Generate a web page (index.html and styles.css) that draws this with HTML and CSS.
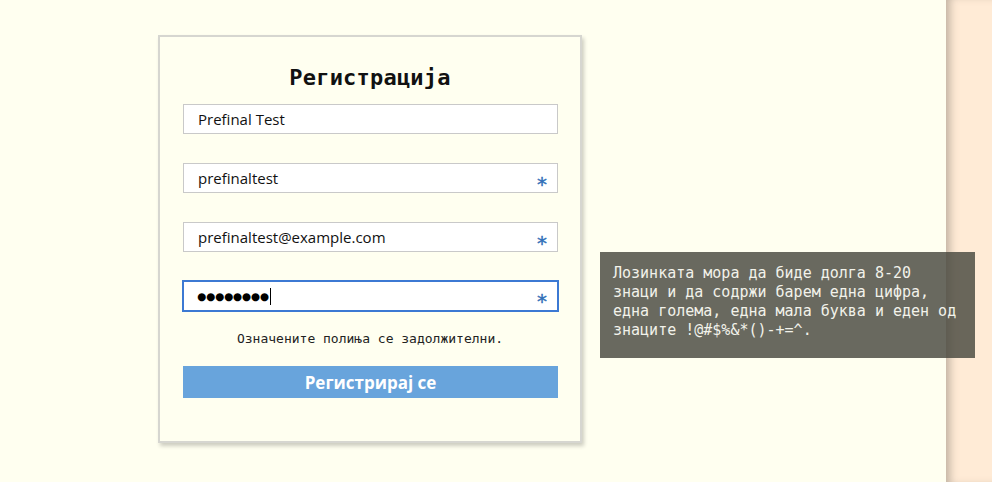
FILE: index.html
```html
<!DOCTYPE html>
<html lang="mk">
<head>
<meta charset="utf-8">
<title>Регистрација</title>
<link rel="stylesheet" href="styles.css">
</head>
<body>
<div class="page">
  <main class="main">
    <form class="card">
      <h1 class="title">Регистрација</h1>
      <div class="field">
        <input class="input" type="text" value="Prefinal Test">
      </div>
      <div class="field">
        <input class="input" type="text" value="prefinaltest">
        <span class="req">*</span>
      </div>
      <div class="field">
        <input class="input" type="email" value="prefinaltest@example.com">
        <span class="req">*</span>
      </div>
      <div class="field">
        <div class="input focused"><span class="dots">●●●●●●●●</span><span class="caret"></span></div>
        <span class="req">*</span>
      </div>
      <p class="note">Означените полиња се задолжителни.</p>
      <button class="submit" type="button">Регистрирај се</button>
    </form>
    <div class="tooltip">Лозинката мора да биде долга 8-20 знаци и да содржи барем една цифра, една голема, една мала буква и еден од знаците !@#$%&amp;*()-+=^.</div>
  </main>
  <aside class="side"></aside>
</div>
</body>
</html>
```
FILE: styles.css
```css
html, body {
  margin: 0;
  padding: 0;
  height: 100%;
}
body {
  background: #fffff0;
  font-family: "Open Sans", sans-serif;
}
.page {
  display: flex;
  height: 482px;
  overflow: hidden;
}
.main {
  position: relative;
  width: 946px;
  flex: none;
}
.side {
  flex: 1;
  background: #ffebd6;
  box-shadow: inset 8px 0 8px -4px rgba(120, 110, 100, 0.45);
}
.card {
  box-sizing: border-box;
  width: 424px;
  margin: 35px 0 0 158px;
  padding: 26px 23px 43px 23px;
  border: 2px solid #d6d6d0;
  background: #fffff0;
  box-shadow: 2px 3px 4px rgba(0, 0, 0, 0.2);
}
.title {
  margin: 0 0 11px 0;
  font-family: "DejaVu Sans Mono", monospace;
  font-size: 22px;
  line-height: 30px;
  font-weight: bold;
  text-align: center;
  letter-spacing: 0.2px;
  color: #111;
}
.field {
  position: relative;
  margin-bottom: 29px;
}
.field:nth-child(5) {
  margin-bottom: 0;
}
.input {
  display: block;
  box-sizing: border-box;
  width: 375px;
  height: 30px;
  margin: 0;
  padding: 0 14px;
  border: 1px solid #c9c9c9;
  background: #fff;
  font-family: "Open Sans", sans-serif;
  font-size: 15px;
  color: #111;
  outline: none;
}
.focused {
  display: flex;
  align-items: center;
  border: 2px solid #3c79d3;
  width: 377px;
  height: 32px;
  margin: -1px 0 0 -1px;
  padding: 0 13px;
}
.dots {
  font-family: "DejaVu Sans", sans-serif;
  font-size: 10.5px;
  letter-spacing: -0.2px;
  color: #000;
}
.caret {
  width: 1px;
  height: 17px;
  margin-left: 1px;
  background: #000;
}
.req {
  position: absolute;
  right: 10px;
  top: 9px;
  font-family: "DejaVu Sans", sans-serif;
  font-size: 20px;
  line-height: 24px;
  color: #2f6fb8;
  -webkit-text-stroke: 0.4px #2f6fb8;
}
.note {
  margin: 18px 0 0 0;
  font-family: "DejaVu Sans Mono", monospace;
  font-size: 13px;
  line-height: 18px;
  text-align: center;
  color: #222;
}
.submit {
  display: block;
  width: 375px;
  height: 32px;
  margin-top: 18px;
  border: none;
  background: #68a4dc;
  color: #fff;
  font-family: "Open Sans", sans-serif;
  font-weight: bold;
  font-size: 17px;
  padding: 0;
}
.tooltip {
  position: absolute;
  left: 600px;
  top: 252px;
  box-sizing: border-box;
  width: 375px;
  height: 106px;
  padding: 12px 10px 0 13px;
  background: rgba(72, 72, 62, 0.82);
  color: #f2f2ea;
  font-family: "DejaVu Sans Mono", monospace;
  font-size: 15px;
  line-height: 19px;
  z-index: 2;
}
```
